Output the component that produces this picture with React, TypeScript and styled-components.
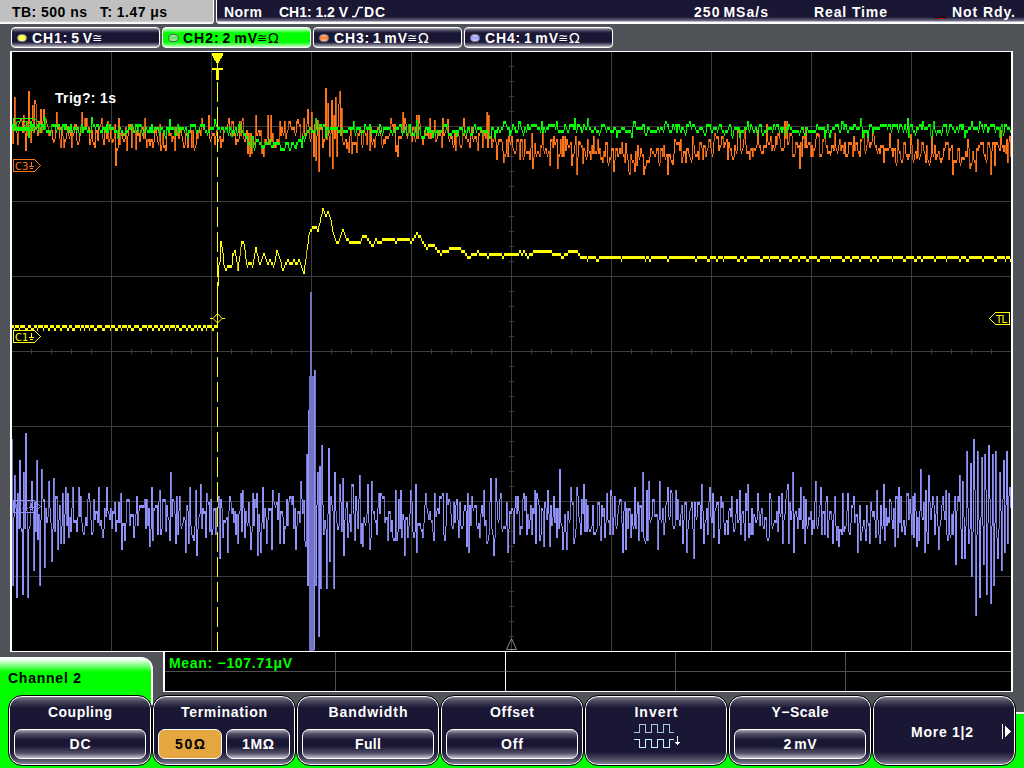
import React from 'react';
import styled, { createGlobalStyle } from 'styled-components';

const GREEN = '#00ff00';
const NAVY = '#1a1735';
const YELLOW = '#ffff00';
const ORANGE = '#ff7519';
const VIOLET = '#9191fa';

type Point = [number, number];

const LEFT = 12;
const RIGHT = 1011;

const parse = (text: string): Point[] =>
  text
    .trim()
    .split(/\s+/)
    .map((pair) => pair.split(',').map(Number) as Point);

const createRandom = (seed: number) => {
  let s = seed;
  return () => {
    s = (s * 1664525 + 1013904223) % 4294967296;
    return s / 4294967296;
  };
};

// the vertical resolution of the screen is 3px
const quantize = (y: number) => Math.round((y - 1) / 3) * 3 + 1;

const levelAt = (points: Point[], x: number) => {
  for (let i = 1; i < points.length; i++) {
    const [x0, y0] = points[i - 1];
    const [x1, y1] = points[i];
    if (x <= x1) return x1 === x0 ? y1 : y0 + ((y1 - y0) * (x - x0)) / (x1 - x0);
  }
  return points[points.length - 1][1];
};

// noise around a base line, with the measured peaks put on top of it
const noisySamples = (base: Point[], peaks: Point[], amplitude: number, seed: number, maxHold: number) => {
  const random = createRandom(seed);
  const peakAt = new Map(peaks);
  const samples: number[] = [];
  let level = levelAt(base, LEFT);
  let hold = 0;
  for (let x = LEFT; x <= RIGHT; x++) {
    const peak = peakAt.get(x);
    if (peak !== undefined) {
      samples.push(peak);
      hold = 0;
      continue;
    }
    if (hold <= 0) {
      level = levelAt(base, x) + (random() * 1.3 + random() * 0.7 - 1) * amplitude;
      hold = 1 + Math.floor(random() * maxHold);
    }
    hold--;
    samples.push(quantize(level));
  }
  return samples;
};

// one vertical stroke per screen column; some of the steep ones are drawn darker
const columns = (samples: number[]) => {
  let bright = '';
  let dim = '';
  for (let i = 0; i < samples.length - 1; i++) {
    const top = Math.min(samples[i], samples[i + 1]);
    const bottom = Math.max(samples[i], samples[i + 1]);
    const stroke = `M${LEFT + i + 0.5} ${top}V${bottom - top >= 3 ? bottom : bottom + 3}`;
    if (bottom - top >= 9 && i % 3 === 0) dim += stroke;
    else bright += stroke;
  }
  return { bright, dim };
};

const ch1Line = parse(`
  12,328 217,328 218,286 219,265 220,262 221,241 223,252 224,264 226,269 228,266 232,265 233,254 235,249
  238,270 240,255 242,241 244,243 247,266 250,262 253,266 256,247 260,266 264,253 267,262 270,260 274,266
  277,250 283,270 286,261 288,260 291,263 294,260 297,263 299,260 301,264 304,273 307,250 309,236 311,230
  313,227 316,227 318,231 321,217 323,208 325,214 327,215 328,211 331,220 333,232 337,243 340,238 343,229
  347,239 353,241 360,242 363,235 366,235 369,241 373,245 376,239 380,241 384,238 393,238 396,241 399,238
  408,238 411,242 414,238 417,233 420,236 424,243 427,247 430,244 433,244 437,249 441,253 444,250 448,250
  450,247 459,247 464,251 468,256 474,253 478,251 480,253 486,253 488,256 490,253 500,253 503,256 506,253
  518,253 520,250 522,253 524,250 527,256 532,253 535,250 551,250 553,253 560,253 562,256 566,253 570,250
  576,250 580,255 588,258 590,256 1011,256`);

const ch1Samples = () => {
  const random = createRandom(11);
  const samples: number[] = [];
  let shifted = false;
  let hold = 0;
  for (let x = LEFT; x <= RIGHT; x++) {
    if (hold <= 0) {
      shifted = !shifted;
      hold = 2 + Math.floor(random() * 3);
      if (x > 585 && !shifted) hold += Math.floor(random() * (x < 690 ? 24 : 9));
    }
    hold--;
    let offset = 0;
    if (shifted && x < 217) offset = -3;
    if (shifted && x > 590) offset = 3;
    samples.push(quantize(levelAt(ch1Line, x)) + offset);
  }
  return samples;
};

const ch2Base = parse('12,126 60,129 240,129 246,134 249,141 262,143 290,145 301,145 304,137 308,129 490,130 500,128 1011,128');
const ch2Peaks = parse(`
  29,138 45,117 92,117 118,139 170,119 188,138 215,119 232,137 263,149 281,151 296,149 316,118 326,138 354,121
  417,120 433,138 457,137 495,138 510,136 557,121 575,118 588,118 617,138 632,138 690,121
  740,138 748,121 825,138 830,138 861,118 863,138 868,138 908,118 909,138 923,121 934,121 965,138 980,121 1000,138`);

const ch3Base = parse('12,129 45,130 140,136 240,134 260,138 300,131 316,132 350,136 420,133 485,135 500,143 550,149 600,150 620,157 680,154 720,145 800,145 880,147 915,152 985,154 1011,146');
const ch3Peaks = parse(`
  13,144 15,97 18,145 21,118 24,115 26,151 29,91 31,143 33,105 35,100 36,104 38,136 41,109 44,109 46,119
  53,140 57,112 61,148 64,148 68,126 72,148 77,141 82,112 85,118 87,118 95,148 98,141 102,118 108,121
  112,143 116,166 119,118 127,151 132,148 136,150 145,118 150,146 153,148 161,151 164,148 166,151 175,151
  184,148 188,148 192,148 196,145 202,118 209,115 215,145 221,148 229,118 236,145 243,118 248,154 250,157
  252,154 256,115 262,154 264,157 268,115 271,115 275,145 280,121 285,121 290,121 298,119 304,118 308,109
  312,112 314,157 315,124 316,161 318,120 319,172 321,125 323,148 326,88 327,140 328,103 330,157 332,100
  333,169 334,115 336,97 337,157 339,104 340,91 342,108 343,142 347,149 349,153 352,154 357,153 370,151
  375,148 385,144 391,118 396,152 398,157 403,112 405,118 412,142 417,115 419,115 423,145 430,118 435,120
  442,148 443,118 448,119 456,151 460,145 464,118 470,148 478,151 483,148 487,112 489,115 492,148 497,160
  499,139 504,163 508,157 512,136 520,160 524,157 533,169 535,143 543,133 550,166 554,136 558,169 561,139
  567,139 572,166 576,136 577,175 579,141 583,164 588,139 591,160 594,136 598,139 603,163 609,163 614,172
  622,142 626,143 629,172 630,175 635,172 638,145 644,175 652,151 660,163 668,175 673,165 675,139 681,139
  686,163 690,157 693,136 699,160 703,160 715,133 718,136 728,160 732,156 738,127 745,127 750,160 753,157
  758,130 767,124 779,133 785,121 787,121 793,157 800,169 802,157 806,127 811,157 813,157 819,134 825,130
  831,153 846,157 853,157 860,157 868,134 873,127 884,163 890,133 893,157 898,139 903,159 908,160 911,134
  917,159 926,163 930,163 932,136 941,158 949,160 953,175 957,160 968,139 970,169 976,172 983,142 987,160
  991,175 995,166 1001,130 1004,152 1008,163 1010,136`);

const ch4Base: Point[] = [[12, 516], [1011, 516]];
const ch4Peaks = parse(`
  12,439 13,586 15,475 17,598 20,460 21,528 23,595 24,472 26,433 28,598 32,481 34,571 37,460 38,540 40,586
  42,469 45,568 49,481 50,508 52,562 54,478 58,550 60,505 61,544 64,544 66,487 69,538 73,487 77,532 79,487
  84,535 89,493 93,532 99,487 103,538 107,487 112,529 115,502 121,493 122,550 125,541 129,499 130,526
  137,496 138,526 143,505 146,529 150,547 152,487 158,535 160,490 161,535 164,502 170,541 171,472 176,544
  177,496 180,496 186,553 189,544 190,487 194,541 196,490 197,556 201,484 206,538 207,493 210,532 213,529
  219,496 220,559 222,508 228,553 231,502 238,544 241,493 245,538 251,550 255,499 257,493 258,556 261,553
  263,487 267,544 272,550 273,490 279,493 284,544 289,502 293,496 296,550 301,481 304,500 306,547 307,454
  308,586 309,410 310,650 311,292 312,650 313,376 314,650 315,370 316,586 317,505 318,472 319,637 320,466
  321,589 322,445 325,520 327,589 329,448 330,562 332,505 334,589 335,472 338,530 340,484 343,478 344,556
  347,502 348,538 352,484 353,484 355,541 360,475 363,547 368,484 370,550 372,481 377,535 379,493 388,541
  395,541 396,490 397,541 401,490 405,556 408,538 411,490 414,538 416,484 417,553 423,538 426,493 433,532
  435,493 443,493 444,535 448,505 453,529 454,502 459,538 460,502 467,547 468,493 469,553 472,496 478,529
  480,538 484,490 487,544 489,535 491,478 494,556 496,478 501,493 508,553 512,508 514,544 518,496 520,535
  524,493 526,496 527,535 531,505 535,490 536,544 544,547 548,490 550,547 554,496 557,538 560,469 563,550
  567,550 571,487 574,544 577,487 581,535 584,484 587,532 593,505 594,535 601,541 602,505 605,538 607,493
  610,535 615,496 623,553 626,550 627,508 631,538 635,487 643,472 644,538 647,490 648,541 649,481 654,499
  658,550 660,481 664,535 668,487 671,490 675,526 676,490 678,499 683,544 687,553 691,508 694,559 698,502
  702,484 705,523 710,487 713,493 714,538 719,544 721,496 728,535 732,496 734,532 740,490 741,535 745,541
  748,484 749,538 753,535 758,493 764,529 769,538 771,499 778,532 779,496 782,493 783,544 788,484 791,520
  793,472 794,553 801,487 805,544 806,499 812,535 816,481 821,487 825,535 828,538 833,544 835,496 839,547
  843,493 844,532 848,493 850,535 854,496 858,553 860,505 866,541 870,544 871,502 876,538 877,490 880,544
  884,484 885,541 890,499 895,547 899,487 901,496 902,532 905,535 910,499 913,496 915,493 917,547 919,541
  921,469 925,553 926,490 928,544 929,475 935,535 937,496 939,550 943,496 948,541 949,493 951,535 955,496
  956,565 960,475 962,559 963,481 965,559 967,451 969,544 971,463 972,577 974,439 976,616 978,451 980,598
  982,457 984,565 985,454 987,595 989,445 991,604 993,454 994,586 996,451 998,559 1000,472 1002,571
  1004,460 1005,553 1007,451 1008,544 1010,487`);

const traces = [
  { ...columns(noisySamples(ch4Base, ch4Peaks, 28, 41, 1.2)), color: VIOLET, dark: '#7373c4' },
  { ...columns(noisySamples(ch3Base, ch3Peaks, 14, 23, 1.8)), color: ORANGE, dark: '#c0560f' },
  { ...columns(ch1Samples()), color: YELLOW, dark: '#bcbc00' },
  { ...columns(noisySamples(ch2Base, ch2Peaks, 7, 5, 1.8)), color: GREEN, dark: '#00c000' },
];

const range = (from: number, to: number, step: number) => {
  const list: number[] = [];
  for (let v = from; v < to; v += step) list.push(v);
  return list;
};

const channels = [
  { name: 'CH1: 5', unit: 'V', ohm: false, color: '#ffff28', width: 60 },
  { name: 'CH2: 2', unit: 'mV', ohm: true, color: '#5ade5a', width: 74 },
  { name: 'CH3: 1', unit: 'mV', ohm: true, color: '#ff7a20', width: 73 },
  { name: 'CH4: 1', unit: 'mV', ohm: true, color: '#9a9aff', width: 73 },
];

const GroundTag: React.FC<{ y: number; color: string; label: string }> = ({ y, color, label }) => (
  <g stroke={color} fill="none" shapeRendering="crispEdges">
    <path d={`M13.5 ${y - 6}H34.5L40.5 ${y}L34.5 ${y + 6}H13.5Z`} />
    <TagText x={15} y={y + 4} fill={color}>
      {label}
    </TagText>
    <path d={`M31.5 ${y - 4}V${y + 1}M29 ${y + 1}H34M30 ${y + 3}H33`} />
  </g>
);

const Waveforms: React.FC = () => (
  <svg width="999" height="599" viewBox="12 52 999 599">
    <g stroke="#3c3c3c" shapeRendering="crispEdges">
      {range(111, 1011, 100).map((x) => (
        <path key={x} d={`M${x + 0.5} 52V651`} />
      ))}
      {range(126, 651, 75).map((y) => (
        <path key={y} d={`M12 ${y + 0.5}H1011`} />
      ))}
      {range(66, 651, 15).map((y) => (
        <path key={y} d={`M509 ${y + 0.5}H514`} />
      ))}
      {range(31, 1011, 20).map((x) => (
        <path key={x} d={`M${x + 0.5} 349V354`} />
      ))}
    </g>
    <path d="M511.5 638.5L516.5 649.5H506.5Z" fill="none" stroke="#8a8a8a" />
    <g fill="none" shapeRendering="crispEdges">
      {traces.map((trace) => (
        <g key={trace.color}>
          <path d={trace.bright} stroke={trace.color} />
          <path d={trace.dim} stroke={trace.dark} />
          {trace.color === VIOLET && (
            <>
              <path d="M308.5 410V586M314.5 370V586" stroke={VIOLET} />
              <path d="M311 292V376" stroke="#7373c4" strokeWidth="2" />
              <path d="M311.5 376V651" stroke="#7373c4" strokeWidth="5" />
            </>
          )}
        </g>
      ))}
    </g>
    <GroundTag y={165.5} color={ORANGE} label="C3" />
    <GroundTag y={336.5} color={YELLOW} label="C1" />
    <GroundTag y={506.5} color={VIOLET} label="C4" />
    <GroundTag y={124.5} color={GREEN} label="C2" />
    <path d="M217.5 82V651" stroke={YELLOW} strokeDasharray="20 5" shapeRendering="crispEdges" />
    <path d="M212 53H223V55L218 64V68H223V70H219V80H216V70H212V68H217V64L212 55Z" fill={YELLOW} shapeRendering="crispEdges" />
    <path d="M210 318.5H213L217.5 313.5L222 318.5H225M213 318.5L217.5 323L222 318.5" fill="none" stroke={YELLOW} />
    <path d="M1009.5 312.5H995.5L989.5 318.5L995.5 324.5H1009.5Z" fill="none" stroke={YELLOW} shapeRendering="crispEdges" />
    <TagText x={996} y={322.5} fill={YELLOW} textLength={11}>
      TL
    </TagText>
    <PlotText x={55} y={103} textLength={61}>
      Trig?: 1s
    </PlotText>
  </svg>
);

const App: React.FC = () => {
  return (
    <>
      <GlobalStyle />
      <Screen>
        <Header>
          <Timebase>
            <Label $w={75}>TB: 500 ns</Label>
            <Label $w={67} $left={13}>T: 1.47 μs</Label>
          </Timebase>
          <StatusBar>
            <Label $w={38}>Norm</Label>
            <Label $w={69} $left={17}>CH1: 1.2 V</Label>
            <EdgeIcon width="12" height="12" viewBox="0 0 12 12">
              <path d="M1 10.5H4.5L8 1.5H12" fill="none" stroke="#fff" strokeWidth="1.6" />
            </EdgeIcon>
            <Label $w={21}>DC</Label>
            <Label $w={74} $left={309} $tight>250 MSa/s</Label>
            <Label $w={73} $left={46}>Real Time</Label>
            <RedMark />
            <Label $w={63} $left={6}>Not Rdy.</Label>
          </StatusBar>
        </Header>

        <ChannelRow>
          {channels.map((channel, index) => (
            <ChannelPill key={channel.name} $active={index === 1}>
              <ChannelDot $color={channel.color} $active={index === 1} />
              <Label $w={channel.width} $tight>
                {channel.name} {channel.unit}
              </Label>
              <Symbol>≅</Symbol>
              {channel.ohm && <Ohm>Ω</Ohm>}
            </ChannelPill>
          ))}
        </ChannelRow>

        <Plot>
          <Waveforms />
        </Plot>

        <InfoRow>
          <ChannelTab>
            <Label $w={73}>Channel 2</Label>
          </ChannelTab>
          <Measurements>
            {range(0, 10, 1).map((cell) => (
              <MeasureCell key={cell} $first={cell < 5} $bright={cell % 5 === 1} $last={cell % 5 === 4}>
                {cell === 0 && <Label $w={123}>Mean: −107.71μV</Label>}
              </MeasureCell>
            ))}
          </Measurements>
        </InfoRow>

        <Menu>
          <MenuButton>
            <Title><Label $w={64}>Coupling</Label></Title>
            <Options><Option><Label $w={21}>DC</Label></Option></Options>
          </MenuButton>
          <MenuButton>
            <Title><Label $w={86}>Termination</Label></Title>
            <Options>
              <Option $selected><Label $w={30}>50Ω</Label></Option>
              <Option><Label $w={32}>1MΩ</Label></Option>
            </Options>
          </MenuButton>
          <MenuButton>
            <Title><Label $w={79}>Bandwidth</Label></Title>
            <Options><Option><Label $w={26}>Full</Label></Option></Options>
          </MenuButton>
          <MenuButton>
            <Title><Label $w={44}>Offset</Label></Title>
            <Options><Option><Label $w={22}>Off</Label></Option></Options>
          </MenuButton>
          <MenuButton>
            <Title><Label $w={43}>Invert</Label></Title>
            <InvertIcon width="46" height="26" viewBox="0 0 46 26">
              <path d="M0 9.5H5.5V1.5H11.5V9.5H17.5V1.5H23.5V9.5H29.5V1.5H35.5V9.5H40" stroke="#a9c4ec" />
              <path d="M0 16.5H5.5V24.5H11.5V16.5H17.5V24.5H23.5V16.5H29.5V24.5H35.5V16.5H40" stroke="#c4f4ff" />
              <path d="M43.5 13V22M41 19.5H46M42 20.5H45" stroke="#fff" />
            </InvertIcon>
          </MenuButton>
          <MenuButton>
            <Title><Label $w={57}>Y−Scale</Label></Title>
            <Options><Option><Label $w={33} $tight>2 mV</Label></Option></Options>
          </MenuButton>
          <MenuButton>
            <More>
              <Label $w={62}>More 1|2</Label>
              <svg width="9" height="16" viewBox="0 0 9 16" shapeRendering="crispEdges">
                <path d="M0.5 0V15" stroke="#fff" />
                <path d="M3 2L9 7.5L3 13Z" fill="#fff" />
              </svg>
            </More>
          </MenuButton>
        </Menu>
      </Screen>
    </>
  );
};

interface LabelProps {
  $w: number;
  $left?: number;
  $tight?: boolean;
  children: React.ReactNode;
}

const Label: React.FC<LabelProps> = ({ $w, $left = 0, $tight = false, children }) => {
  const ref = React.useRef<HTMLSpanElement>(null);
  const [spacing, setSpacing] = React.useState(0);
  React.useLayoutEffect(() => {
    const el = ref.current;
    if (!el) return;
    const count = (el.textContent || '').length;
    setSpacing(($w - el.getBoundingClientRect().width) / Math.max(count - 1, 1));
  }, [$w]);
  return (
    <LabelBox $w={$w} $left={$left} $tight={$tight}>
      <span ref={ref} style={{ letterSpacing: spacing }}>
        {children}
      </span>
    </LabelBox>
  );
};

const GlobalStyle = createGlobalStyle`
  body {
    margin: 0;
    background: #505357;
    overflow: hidden;
  }

  * {
    box-sizing: border-box;
  }

  svg {
    display: block;
  }
`;

const Screen = styled.div`
  width: 1024px;
  height: 768px;
  display: flex;
  flex-direction: column;
  background: #505357;
  color: #fff;
  font: bold 14px/16px 'Liberation Sans', Arial, sans-serif;
  overflow: hidden;
`;

const LabelBox = styled.div<{ $w: number; $left: number; $tight: boolean }>`
  flex: none;
  width: ${({ $w }) => $w}px;
  margin-left: ${({ $left }) => $left}px;
  white-space: pre;
  word-spacing: ${({ $tight }) => ($tight ? '-2px' : 'normal')};
`;

const TagText = styled.text`
  font: 10px 'DejaVu Sans', sans-serif;
  stroke: none;
`;

const PlotText = styled.text`
  font: bold 14px 'Liberation Sans', Arial, sans-serif;
  fill: #fff;
`;

const Header = styled.div`
  height: 24px;
  display: flex;
  gap: 2px;
`;

const Timebase = styled.div`
  width: 214px;
  display: flex;
  align-items: flex-start;
  padding: 4px 0 0 12px;
  background: linear-gradient(#c0c0c0 21px, #fff 23px);
  border-right: 1px solid #fff;
  border-bottom-right-radius: 3px;
  color: #000;
`;

const StatusBar = styled.div`
  flex: 1;
  display: flex;
  align-items: flex-start;
  padding: 4px 0 0 7px;
  background: linear-gradient(${NAVY} 17px, #77748a 21px, #fff 22px);
  border-left: 1px solid #fff;
  border-bottom-left-radius: 4px;
`;

const EdgeIcon = styled.svg`
  margin: 2px 1px 0 3px;
`;

const RedMark = styled.div`
  width: 11px;
  height: 2px;
  margin: 13px 0 0 48px;
  background: #000;
  border-bottom: 1px solid #c00000;
  border-left: 3px solid ${NAVY};
`;

const ChannelRow = styled.div`
  height: 27px;
  display: flex;
  gap: 2px;
  padding: 3px 11px;
`;

const ChannelPill = styled.div<{ $active: boolean }>`
  width: 149px;
  height: 21px;
  display: flex;
  align-items: center;
  padding-left: 5px;
  border: 1px solid #fff;
  border-radius: 4px;
  color: ${({ $active }) => ($active ? '#000' : '#fff')};
  background: ${({ $active }) =>
    $active
      ? `linear-gradient(#eaffea 0, ${GREEN} 5px, ${GREEN} 14px, #c8ffc8 19px)`
      : `linear-gradient(#bdbcc6 0, #555269 2px, ${NAVY} 5px, ${NAVY} 14px, #77758a 17px, #ccc 19px)`};
`;

const ChannelDot = styled.div<{ $color: string; $active: boolean }>`
  flex: none;
  width: ${({ $active }) => ($active ? 11 : 10)}px;
  height: 8px;
  margin-right: ${({ $active }) => ($active ? 4 : 5)}px;
  border-radius: 4px;
  background: linear-gradient(#fff8, ${({ $color }) => $color} 45%, #fff8), ${({ $color }) => $color};
  border: 1px solid ${({ $active }) => ($active ? '#476847' : '#77778a')};
`;

const Symbol = styled.span`
  width: 9px;
  font: 12px/14px 'DejaVu Sans', sans-serif;
`;

const Ohm = styled.span`
  margin-left: 2px;
  font: 14px/16px 'DejaVu Sans', sans-serif;
`;

const Plot = styled.div`
  width: 1003px;
  height: 601px;
  margin-left: 10px;
  border: solid #fff;
  border-width: 1px 2px;
  background: #000;
`;

const InfoRow = styled.div`
  height: 43px;
  display: flex;
  align-items: flex-start;
`;

const ChannelTab = styled.div`
  width: 153px;
  height: 38px;
  margin-top: 5px;
  padding: 13px 0 0 8px;
  color: #000;
  background: linear-gradient(#fff 0, #eaffea 3px, ${GREEN} 15px);
  border-right: 2px solid #fff;
  border-top-right-radius: 12px;
`;

const Measurements = styled.div`
  width: 850px;
  height: 40px;
  margin-left: 10px;
  display: grid;
  grid-template-columns: 171px 170px 170px 170px 165px;
  grid-template-rows: 20px 19px;
  border: solid #fff;
  border-width: 0 2px 1px;
  background: #000;
  color: ${GREEN};
`;

const MeasureCell = styled.div<{ $first: boolean; $bright: boolean; $last: boolean }>`
  padding: 3px 0 0 4px;
  border-right: ${({ $last, $bright }) => ($last ? 'none' : `1px solid ${$bright ? '#fff' : '#505050'}`)};
  border-bottom: ${({ $first }) => ($first ? '1px solid #505050' : 'none')};
`;

const Menu = styled.div`
  height: 73px;
  display: flex;
  padding: 0 8px;
  background:
    linear-gradient(#fff, #fff) 151px 0 / 2px 10px no-repeat,
    linear-gradient(${GREEN}, ${GREEN}) 0 0 / 151px 73px no-repeat,
    linear-gradient(transparent 17px, #fff 17px, #fff 19px, ${GREEN} 19px);
`;

const MenuButton = styled.div`
  width: 144px;
  height: 71px;
  display: flex;
  flex-direction: column;
  align-items: center;
  border: 1px solid #000;
  border-radius: 14px;
  background: linear-gradient(#8c8a99 0, #4b485f 5px, ${NAVY} 12px, ${NAVY} 56px, #4b485f 63px, #8c8a99 69px);
  box-shadow: inset 0 0 0 1px #fff;
`;

const Title = styled.div`
  margin-top: 8px;
  height: 16px;
`;

const Options = styled.div`
  width: 100%;
  display: flex;
  gap: 4px;
  padding: 9px 5px 0;
`;

const Option = styled.div<{ $selected?: boolean }>`
  flex: 1;
  height: 30px;
  display: flex;
  align-items: center;
  justify-content: center;
  border: 1px solid #fff;
  border-radius: 7px;
  color: ${({ $selected }) => ($selected ? '#000' : '#fff')};
  background: ${({ $selected }) =>
    $selected
      ? '#e5a640'
      : `linear-gradient(#aaa8b4 0, #4e4b62 4px, ${NAVY} 10px, ${NAVY} 16px, #4e4b62 23px, #c0bfc8 28px)`};
`;

const InvertIcon = styled.svg`
  margin: 3px 0 0 1px;
  fill: none;
  shape-rendering: crispEdges;
`;

const More = styled.div`
  width: 100%;
  display: flex;
  justify-content: space-between;
  align-items: center;
  padding: 28px 4px 0 38px;
`;

export default App;
